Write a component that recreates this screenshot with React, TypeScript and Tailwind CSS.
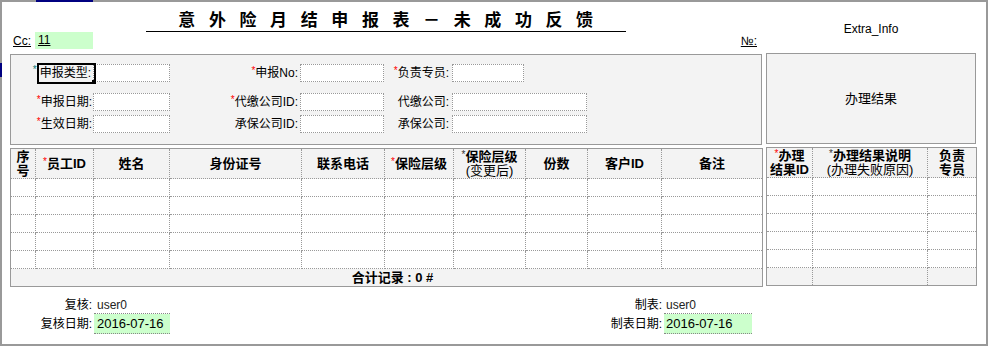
import React from 'react';

const Star = ({ dark = false }: { dark?: boolean }) => (
    <span className={`${dark ? 'text-[#333]' : 'text-[#ff0000]'} text-[10px] leading-none relative -top-[3px] font-normal`}>*</span>
);

const Input = ({ w }: { w: string }) => (
    <div className={`${w} h-[18px] bg-white border border-dotted border-[#999]`}></div>
);

const leftCols = [25, 58, 76, 132, 83, 69, 72, 62, 74, 101];
const rightCols = [46, 115, 49];

const App = () => {
    const leftHeads: React.ReactNode[] = [
        <>序<br />号</>,
        <><Star />员工ID</>,
        '姓名',
        '身份证号',
        '联系电话',
        <><Star />保险层级</>,
        <><Star dark />保险层级<br /><span className="font-normal">(变更后)</span></>,
        '份数',
        '客户ID',
        '备注',
    ];
    const rightHeads: React.ReactNode[] = [
        <><Star />办理<br />结果ID</>,
        <><Star dark />办理结果说明<br /><span className="font-normal">(办理失败原因)</span></>,
        <>负责<br />专员</>,
    ];
    const rows = [0, 1, 2, 3, 4];

    return (
        <div className="w-[988px] h-[346px] bg-white font-['Liberation_Sans','Noto_Sans_CJK_SC',sans-serif] text-[12px] text-black">
            <div className="relative w-[988px] h-[346px] border-t-2 border-l-2 border-r-2 border-b-2 border-[#999] flex">
                {/* selection marks */}
                <div className="absolute -top-[2px] left-[34px] w-[57px] h-[2px] bg-[#000080]"></div>
                <div className="absolute top-[61px] -left-[2px] w-[2px] h-[14px] bg-[#000080]"></div>

                {/* left column */}
                <div className="ml-[8px] w-[752px] flex flex-col">
                    <div className="ml-[136px] w-[480px] h-[30px] pt-[9px] border-b border-black text-center text-[17px] leading-[20px] font-bold tracking-[13.6px] pl-[13px]">
                        意外险月结申报表－未成功反馈
                    </div>
                    <div className="h-[17px] flex items-center">
                        <span className="ml-[3px] w-[22px] underline">Cc:</span>
                        <div className="w-[58px] h-[17px] bg-[#ccffcc] pl-[3px] leading-[17px]">
                            <span className="underline">11</span>
                        </div>
                        <span className="ml-auto mr-[5px] underline">№:</span>
                    </div>

                    <div className="mt-[5px] h-[91px] border border-[#999] bg-[#f3f3f3] pt-[9px]">
                        <div className="flex h-[18px] items-center">
                            <div className="w-[82px] flex justify-end items-center">
                                <span className="text-[#0a7a7a] text-[10px] leading-none relative -top-[3px]">*</span>
                                <span className="relative z-10 -mr-[3px] h-[21px] border-2 border-black pl-[1px] pr-[3px] leading-[17px]">
                                    申报类型:
                                    <span className="absolute -right-[2px] -bottom-[2px] w-[4px] h-[4px] bg-black"></span>
                                </span>
                            </div>
                            <Input w="w-[77px]" />
                            <div className="w-[130px] text-right pr-[2px]"><Star />申报No:</div>
                            <Input w="w-[84px]" />
                            <div className="w-[68px] text-right pr-[3px]"><Star />负责专员:</div>
                            <Input w="w-[72px]" />
                        </div>
                        <div className="flex h-[18px] items-center mt-[11px]">
                            <div className="w-[82px] text-right pr-[1px]"><Star />申报日期:</div>
                            <Input w="w-[77px]" />
                            <div className="w-[130px] text-right pr-[2px]"><Star />代缴公司ID:</div>
                            <Input w="w-[84px]" />
                            <div className="w-[68px] text-right pr-[3px]">代缴公司:</div>
                            <Input w="w-[135px]" />
                        </div>
                        <div className="flex h-[18px] items-center mt-[4px]">
                            <div className="w-[82px] text-right pr-[1px]"><Star />生效日期:</div>
                            <Input w="w-[77px]" />
                            <div className="w-[130px] text-right pr-[2px]">承保公司ID:</div>
                            <Input w="w-[84px]" />
                            <div className="w-[68px] text-right pr-[3px]">承保公司:</div>
                            <Input w="w-[135px]" />
                        </div>
                    </div>

                    <table className="mt-[3px] w-[752px] table-fixed border-collapse border border-[#999]">
                        <colgroup>
                            {leftCols.map((w, i) => <col key={i} style={{ width: w }} />)}
                        </colgroup>
                        <tbody>
                            <tr className="h-[30px] bg-[#f3f3f3]">
                                {leftHeads.map((h, i) => (
                                    <td key={i} className="border border-dotted border-[#999] text-center font-bold text-[13px] leading-[14px] p-0 align-middle">{h}</td>
                                ))}
                            </tr>
                            {rows.map(r => (
                                <tr key={r} className="h-[18px] bg-white">
                                    {leftCols.map((_, i) => (
                                        <td key={i} className="border border-dotted border-[#999] p-0"></td>
                                    ))}
                                </tr>
                            ))}
                            <tr className="h-[18px] bg-[#f3f3f3]">
                                <td colSpan={10} className="border border-dotted border-[#999] text-center font-bold text-[13px] leading-[14px] p-0 pl-[12px]">合计记录 : 0 #</td>
                            </tr>
                        </tbody>
                    </table>

                    <div className="mt-[9px] flex">
                        <div className="flex flex-col">
                            <div className="flex h-[18px] items-center">
                                <div className="w-[82px] text-right">复核:</div>
                                <div className="ml-[2px] w-[76px] h-[18px] border-b border-dotted border-[#888] pl-[3px] leading-[18px] text-[#222]">user0</div>
                            </div>
                            <div className="flex h-[20px] items-center">
                                <div className="w-[82px] text-right">复核日期:</div>
                                <div className="ml-[2px] w-[76px] h-[20px] bg-[#ccffcc] border-b border-dotted border-[#888] pl-[3px] leading-[19px] text-[13px]">2016-07-16</div>
                            </div>
                        </div>
                        <div className="ml-auto mr-[10px] flex flex-col">
                            <div className="flex h-[18px] items-center">
                                <div className="w-[70px] text-right">制表:</div>
                                <div className="ml-[2px] w-[88px] h-[18px] border-b border-dotted border-[#888] pl-[2px] leading-[18px] text-[#222]">user0</div>
                            </div>
                            <div className="flex h-[20px] items-center">
                                <div className="w-[70px] text-right">制表日期:</div>
                                <div className="ml-[2px] w-[88px] h-[20px] bg-[#ccffcc] border-b border-dotted border-[#888] pl-[2px] leading-[19px] text-[13px]">2016-07-16</div>
                            </div>
                        </div>
                    </div>
                </div>

                {/* right column */}
                <div className="ml-[4px] w-[210px] flex flex-col">
                    <div className="h-[51px] pt-[20px] text-center leading-[14px]">Extra_Info</div>
                    <div className="h-[91px] border border-[#999] bg-[#f3f3f3] flex items-center justify-center text-[13px]">办理结果</div>
                    <table className="mt-[3px] w-[210px] table-fixed border-collapse border border-[#999]">
                        <colgroup>
                            {rightCols.map((w, i) => <col key={i} style={{ width: w }} />)}
                        </colgroup>
                        <tbody>
                            <tr className="h-[30px] bg-[#f3f3f3]">
                                {rightHeads.map((h, i) => (
                                    <td key={i} className="border border-dotted border-[#999] text-center font-bold text-[13px] leading-[14px] p-0 align-middle">{h}</td>
                                ))}
                            </tr>
                            {rows.map(r => (
                                <tr key={r} className="h-[18px] bg-white">
                                    {rightCols.map((_, i) => (
                                        <td key={i} className="border border-dotted border-[#999] p-0"></td>
                                    ))}
                                </tr>
                            ))}
                            <tr className="h-[18px] bg-[#f3f3f3]">
                                {rightCols.map((_, i) => (
                                    <td key={i} className="border border-dotted border-[#999] p-0"></td>
                                ))}
                            </tr>
                        </tbody>
                    </table>
                </div>
            </div>
        </div>
    );
};

export default App;
